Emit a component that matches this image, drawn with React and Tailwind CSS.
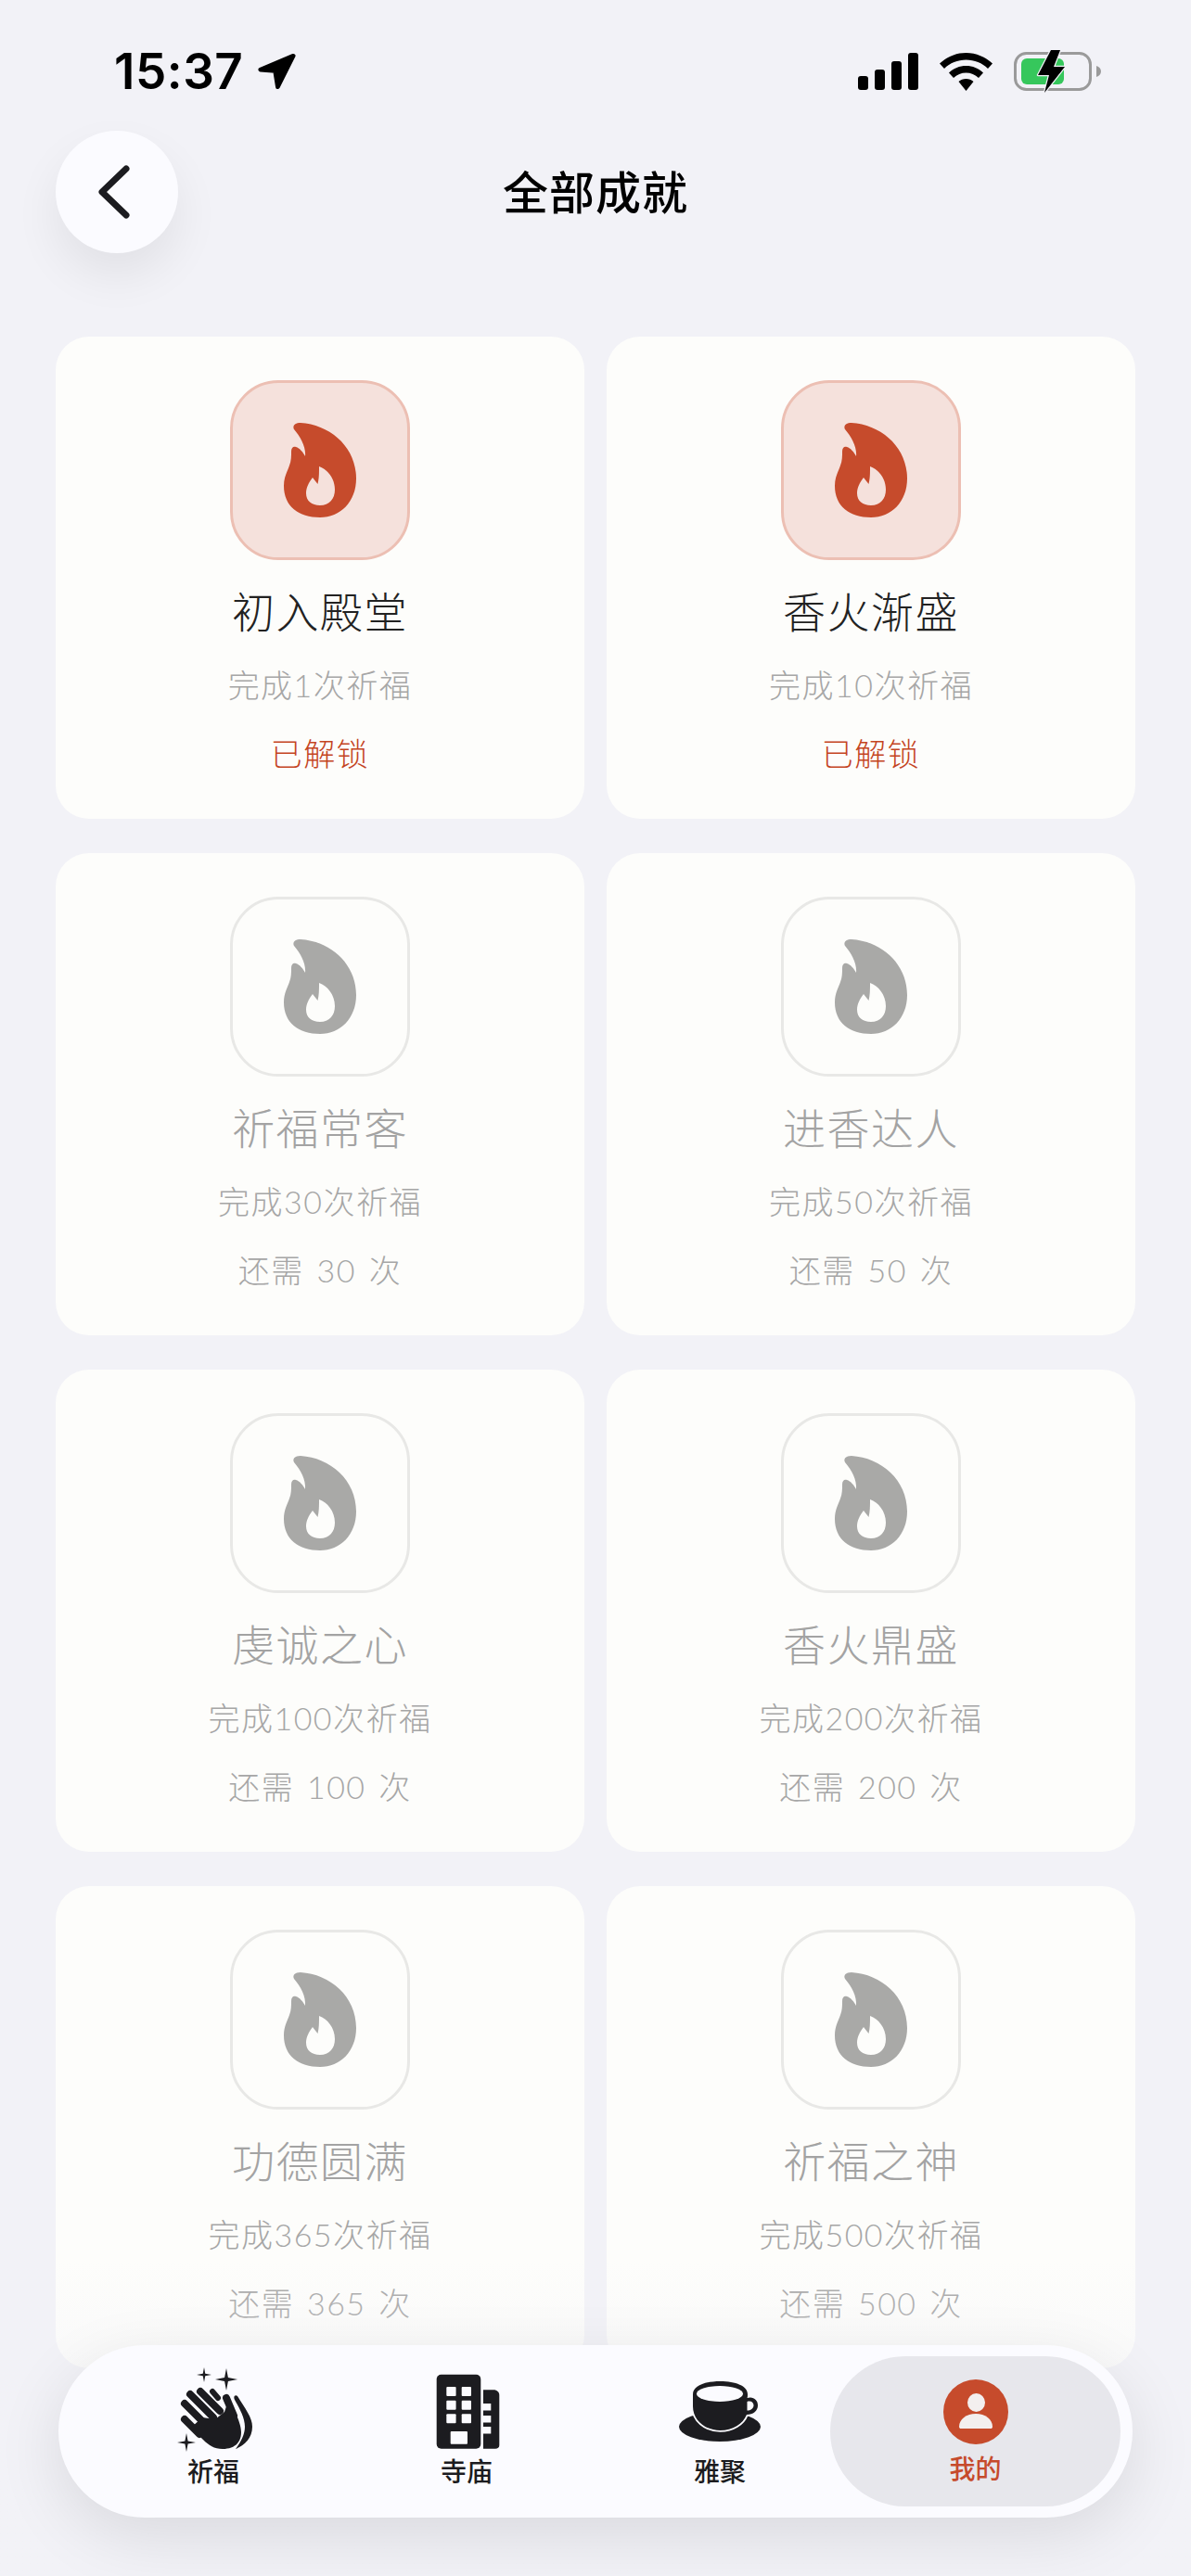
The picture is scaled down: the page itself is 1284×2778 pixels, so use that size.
const achievements = [
  { title: '初入殿堂', desc: '完成1次祈福', unlocked: true },
  { title: '香火渐盛', desc: '完成10次祈福', unlocked: true },
  { title: '祈福常客', desc: '完成30次祈福', need: 30 },
  { title: '进香达人', desc: '完成50次祈福', need: 50 },
  { title: '虔诚之心', desc: '完成100次祈福', need: 100 },
  { title: '香火鼎盛', desc: '完成200次祈福', need: 200 },
  { title: '功德圆满', desc: '完成365次祈福', need: 365 },
  { title: '祈福之神', desc: '完成500次祈福', need: 500 },
];

function Flame({ className }) {
  return (
    <svg viewBox="0 0 78 102" className={className} fill="currentColor">
      <path
        fillRule="evenodd"
        d="M11 7C9 3 12 0 18 0C50 2 78 26 78 60C78 85 61 102 39 102C16 102 0 90 0 68C0 58 4 52 6 46C8 41 8 36 8 31C8 27 10 25 13 26C17 27 21 32 23 36C24 26 18 15 11 7ZM38 47C47 50 55 60 55 72C55 82 49 89 39 89C30 89 24 84 24 76C24 70 27 64 31 59L36.5 66C38 60 38 54 38 47Z"
      />
    </svg>
  );
}

function AchievementCard({ item }) {
  return (
    <div className="h-[520px] rounded-[36px] bg-[#fdfdfb] pt-[47px] flex flex-col items-center">
      <div
        className={`w-[194px] h-[194px] rounded-[52px] border-[3px] flex items-center justify-center ${
          item.unlocked ? 'bg-[#f5e1dc] border-[#ecbfb3] text-[#c64b2c]' : 'border-[#e8e8e6] text-[#a9a9a7]'
        }`}
      >
        <Flame className="w-[78px] h-[102px]" />
      </div>
      <div className={`mt-[28px] text-[46px] leading-[56px] tracking-[1.5px] font-light ${item.unlocked ? 'text-[#222222]' : 'text-[#a3a3a3]'}`}>
        {item.title}
      </div>
      <div className="mt-[29px] text-[34px] leading-[44px] tracking-[1.5px] font-light text-[#a6a6a6]">{item.desc}</div>
      <div className={`mt-[30px] text-[34px] leading-[44px] tracking-[1.5px] font-light [word-spacing:3px] ${item.unlocked ? 'text-[#c4441f]' : 'text-[#a6a6a6]'}`}>
        {item.unlocked ? '已解锁' : `还需 ${item.need} 次`}
      </div>
    </div>
  );
}

function Sparkle({ x, y, r }) {
  const k = r * 0.16;
  return (
    <path d={`M${x} ${y - r}L${x + k} ${y - k}L${x + r} ${y}L${x + k} ${y + k}L${x} ${y + r}L${x - k} ${y + k}L${x - r} ${y}L${x - k} ${y - k}Z`} />
  );
}

function ClapIcon() {
  return (
    <svg viewBox="0 0 110 110" className="w-[110px] h-[110px] shrink-0 ml-[10px]" fill="#1c1c20">
      <Sparkle x={40} y={16} r={8} />
      <Sparkle x={64} y={21} r={12} />
      <Sparkle x={21} y={89} r={10} />
      <g stroke="#1c1c20" strokeWidth="8" strokeLinecap="round" fill="none">
        <path d="M19 64L35 80" />
        <path d="M19 47L42 70" />
        <path d="M25 37L50 62" />
        <path d="M36 34L57 55" />
        <path d="M49 34L55 41" strokeWidth="6" />
        <path d="M64 41L72 60" />
      </g>
      <path d="M38 62L52 64L62 56L66 44C72 52 80 68 80 78C80 90 72 96 60 96C51 96 45 92 39 86L26 73Z" />
      <path d="M76 39C84 52 92 62 92 72C92 84 84 92 74 96C80 88 84 80 84 72C84 62 78 52 73 43C71 39 74 37 76 39Z" />
    </svg>
  );
}

function BuildingIcon() {
  return (
    <svg viewBox="0 0 110 100" className="w-[110px] h-[100px] shrink-0 ml-[4px]">
      <rect x="20.7" y="10.7" width="47.6" height="80" rx="5" fill="#1c1c20" />
      {[24, 38.7, 53.3].map(y =>
        [31.3, 47.7].map(x => <rect key={`${x}-${y}`} x={x} y={y} width="10.3" height="10" rx="1" fill="#fbfbff" />)
      )}
      <rect x="35.7" y="72" width="18.3" height="13.7" rx="1" fill="#fbfbff" />
      <path d="M71 27.3H82C86 27.3 88.3 30 88.3 33V87C88.3 89.5 86.5 90.7 84 90.7H71Z" fill="#1c1c20" />
      {[42, 55, 67].map(y => (
        <rect key={y} x="71" y={y} width="8.3" height="7.5" fill="#fbfbff" />
      ))}
    </svg>
  );
}

function CupIcon() {
  return (
    <svg viewBox="0 0 88 65" className="w-[88px] h-[65px] shrink-0">
      <ellipse cx="44" cy="49" rx="44" ry="16" fill="#1c1c20" />
      <path
        d="M15 14C15 5 28 0 44.5 0C61 0 74 5 74 14C74 16 74 17 73.5 18C80 16 85 20 85 26C85 32 80 36 73 36C69 46 58 53 44.5 53C28 53 15 42 15 27Z"
        fill="#1c1c20"
        stroke="#fbfbff"
        strokeWidth="3.5"
        paintOrder="stroke"
      />
      <path d="M73.5 22C77 20.5 80.5 22.5 80.5 26C80.5 29.5 77 31.5 73.5 31.5Z" fill="#fbfbff" />
      <ellipse cx="44" cy="13.5" rx="25" ry="8.5" fill="#fbfbff" />
    </svg>
  );
}

function UserIcon() {
  return (
    <svg viewBox="0 0 70 70" className="w-[70px] h-[70px]">
      <circle cx="35" cy="35" r="35" fill="#c64b2c" />
      <ellipse cx="35.5" cy="25" rx="9.5" ry="10" fill="#f3efef" />
      <path d="M17 51C17 43 25 37 35 37C45 37 53 43 53 51C53 52.5 52 53 51 53H19C18 53 17 52.5 17 51Z" fill="#f3efef" />
    </svg>
  );
}

function TabItem({ icon, label }) {
  return (
    <div className="w-[238px] h-full flex flex-col items-center">
      <div className="h-[118px] w-full flex items-center justify-center">{icon}</div>
      <div className="-mt-[12px] text-[28px] leading-[36px] font-medium text-[#1c1c20]">{label}</div>
    </div>
  );
}

function StatusIcons() {
  return (
    <div className="flex items-center gap-[23px]">
      <svg viewBox="0 0 65 40" className="w-[65px] h-[40px]">
        <rect x="0" y="25" width="11" height="15" rx="3" />
        <rect x="18" y="18" width="11" height="22" rx="3" />
        <rect x="36" y="9" width="11" height="31" rx="3" />
        <rect x="54" y="0" width="11" height="40" rx="3" />
      </svg>
      <svg viewBox="0 0 57 41" className="w-[57px] h-[41px]">
        <path d="M28.5 0C39.5 0 49.5 4.5 57 11.5L52 17C46 11 37.5 7.5 28.5 7.5C19.5 7.5 11 11 5 17L0 11.5C7.5 4.5 17.5 0 28.5 0Z" />
        <path d="M28.5 14C35.5 14 42 16.5 47 21.5L42 27C38.5 23.5 33.5 21.5 28.5 21.5C23.5 21.5 18.5 23.5 15 27L10 21.5C15 16.5 21.5 14 28.5 14Z" />
        <path d="M28.5 28C31.5 28 34.5 29 36.5 31L28.5 41L20.5 31C22.5 29 25.5 28 28.5 28Z" />
      </svg>
      <svg viewBox="0 0 94 46" className="w-[94px] h-[46px]">
        <rect x="1.5" y="3.5" width="81" height="39" rx="12" fill="none" stroke="#9a9a9a" strokeWidth="3" />
        <rect x="8" y="9" width="46" height="28" rx="6" fill="#36c75c" />
        <path d="M89 17C92 18 94 20 94 23C94 26 92 28 89 29Z" fill="#9a9a9a" />
        <path d="M40 0L26 27H38L33 46L55 18H43L50 0Z" fill="#000" stroke="#f2f2f7" strokeWidth="2.5" strokeLinejoin="round" paintOrder="stroke" />
      </svg>
    </div>
  );
}

export default function App() {
  return (
    <div className="relative w-[1284px] h-[2778px] overflow-hidden bg-[#f2f2f7] font-['Lato','Noto_Sans_CJK_SC',sans-serif]">
      <div className="h-[141px] pt-[13px] pl-[123px] pr-[97px] flex items-center justify-between text-black">
        <div className="flex items-center gap-[16px]">
          <span className="text-[53px] leading-none font-semibold tracking-[0.5px] font-['Inter',sans-serif]">15:37</span>
          <svg viewBox="0 0 44 42" className="w-[41px] h-[40px]">
            <path d="M41 3L3 19L20 20.5L23 39Z" stroke="#000" strokeWidth="5" strokeLinejoin="round" />
          </svg>
        </div>
        <StatusIcons />
      </div>

      <div className="px-[60px] h-[132px] flex items-center">
        <button className="w-[132px] h-[132px] rounded-full bg-[#fbfbff] shadow-[0_24px_50px_rgba(0,0,0,0.07)] flex items-center justify-center">
          <svg viewBox="0 0 36 58" className="w-[36px] h-[58px] mr-[6px]" fill="none" stroke="#1c1c20" strokeWidth="7" strokeLinecap="round" strokeLinejoin="round">
            <path d="M31 4L5 29L31 54" />
          </svg>
        </button>
        <div className="flex-1 text-center pr-[132px] text-[49px] leading-[60px] font-medium tracking-[1px] text-black">全部成就</div>
      </div>

      <div className="mt-[90px] px-[60px] grid grid-cols-2 gap-x-[24px] gap-y-[37px]">
        {achievements.map(item => (
          <AchievementCard key={item.title} item={item} />
        ))}
      </div>

      <div className="absolute left-0 right-0 bottom-0 h-[340px] bg-gradient-to-b from-transparent to-[#f2f2f7]" />

      <div className="absolute left-[63px] top-[2529px] w-[1158px] h-[186px] rounded-[93px] bg-[#fbfbff] shadow-[0_20px_70px_rgba(0,0,0,0.1)] pl-[48px] pr-[13px] py-[12px] flex">
        <div className="flex gap-[35px]">
          <TabItem icon={<ClapIcon />} label="祈福" />
          <TabItem icon={<BuildingIcon />} label="寺庙" />
          <TabItem icon={<CupIcon />} label="雅聚" />
        </div>
        <div className="flex-1 rounded-[81px] bg-[#e7e7ec] flex flex-col items-center pt-[25px]">
          <UserIcon />
          <div className="mt-[8px] text-[28px] leading-[36px] font-medium text-[#c64b2c]">我的</div>
        </div>
      </div>
    </div>
  );
}
